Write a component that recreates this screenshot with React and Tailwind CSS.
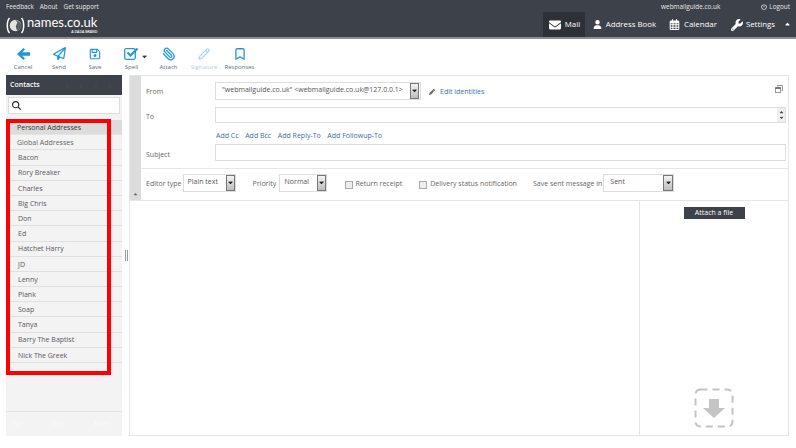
import React from "react";
import {
  FaRegPaperPlane,
  FaRegFloppyDisk,
  FaUser,
  FaRegCalendarDays,
  FaWrench,
  FaPowerOff,
  FaEnvelope,
  FaMagnifyingGlass,
  FaPen,
  FaCaretUp,
  FaCaretDown,
  FaRegWindowRestore,
  FaChevronLeft,
  FaChevronRight,
} from "react-icons/fa6";
import { Paperclip, Pencil, Bookmark } from "lucide-react";

const CONTACTS = [
  "Bacon",
  "Rory Breaker",
  "Charles",
  "Big Chris",
  "Don",
  "Ed",
  "Hatchet Harry",
  "JD",
  "Lenny",
  "Plank",
  "Soap",
  "Tanya",
  "Barry The Baptist",
  "Nick The Greek",
];

const SelectArrow = ({ className = "w-[9px]" }) => (
  <div className={`${className} h-full shrink-0 border border-[#777] bg-gradient-to-b from-[#f4f4f4] to-[#bdbdbd] flex items-center justify-center`}>
    <FaCaretDown className="text-[7px] text-[#222]" />
  </div>
);

const ToolButton = ({ icon, label, muted, width }) => (
  <div className={`${width} flex flex-col items-center`}>
    <div className="h-[19px] flex items-center justify-center text-[#2297d6]">{icon}</div>
    <span className={`text-[6px] leading-[8px] ${muted ? "text-[#b5cfdc]" : "text-[#55708a]"}`}>{label}</span>
  </div>
);

const Header = () => (
  <header className="h-[39px] bg-[#3d4149] border-b-2 border-[#8b8d91] text-white flex justify-between shrink-0">
    <div className="pl-[6px]">
      <div className="flex gap-[6px] text-[6.300px] leading-[13px] text-[#e8e8e8]">
        <span>Feedback</span>
        <span>About</span>
        <span>Get support</span>
      </div>
      <div className="flex items-start mt-[3px]">
        <svg width="20" height="17" viewBox="0 0 20 17" className="mt-px">
          <circle cx="9.500" cy="8.500" r="5.800" fill="#e2e2e2" />
          <path d="M9 3c2.500 1.500 2.800 3 1.500 4.500S10 11.500 11.500 14c2.500-1 3.800-3.200 3.800-5.500C15.300 6 12.500 3.200 9 3z" fill="#5a5e66" />
          <path d="M3.500 1C.6 4 .6 13 3.500 16M15.500 1c2.900 3 2.900 12 0 15" fill="none" stroke="#fff" strokeWidth="1.500" />
        </svg>
        <div className="flex flex-col items-end ml-px">
          <span className="text-[13px] leading-[13px] font-['Lato',sans-serif]">names.co.uk</span>
          <span className="text-[3.500px] leading-[4px] mt-px font-semibold">A DADA BRAND</span>
        </div>
      </div>
    </div>
    <div className="flex flex-col items-end">
      <div className="flex text-[6.400px] leading-[13px] pr-[6px] text-[#e8e8e8]">
        <span>webmailguide.co.uk</span>
        <span className="flex items-center gap-[2px] ml-[41px]">
          <FaPowerOff className="text-[6px]" />
          Logout
        </span>
      </div>
      <nav className="flex h-[26px] -mt-px text-[7.850px] items-stretch">
        <div className="w-[42px] bg-[#2d3036] flex items-center pl-[6px] gap-[4px]">
          <FaEnvelope className="text-[12px]" />
          Mail
        </div>
        <div className="flex items-center gap-[4px] ml-[8px]">
          <FaUser className="text-[9px]" />
          Address Book
        </div>
        <div className="flex items-center gap-[4px] ml-[13px]">
          <FaRegCalendarDays className="text-[11px]" />
          Calendar
        </div>
        <div className="flex items-center gap-[3px] ml-[14px] pr-[5px]">
          <FaWrench className="text-[12px]" />
          Settings
          <FaCaretUp className="text-[7px] ml-[6px]" />
        </div>
      </nav>
    </div>
  </header>
);

const Toolbar = () => (
  <div className="h-[36px] flex items-start pt-[5px] pl-[5px] shrink-0">
    <ToolButton
      width="w-[36px]"
      label="Cancel"
      icon={
        <svg width="13" height="12" viewBox="0 0 13 12" fill="currentColor">
          <path d="M6.500 0 8 1.500 5.300 4.300H13v3.400H5.300L8 10.500 6.500 12 0 6z" />
        </svg>
      }
    />
    <ToolButton width="w-[36px]" label="Send" icon={<FaRegPaperPlane className="text-[13px]" />} />
    <ToolButton width="w-[36px]" label="Save" icon={<FaRegFloppyDisk className="text-[12px]" />} />
    <div className="w-[37px] flex flex-col items-center">
      <div className="h-[19px] flex items-center text-[#2297d6]">
        <svg width="15" height="13" viewBox="0 0 15 13" fill="none" stroke="currentColor">
          <rect x="0.700" y="1.700" width="10.600" height="10.600" rx="1.500" strokeWidth="1.300" />
          <path d="M3.500 5.500 6.500 8.500 13.500 1.500" strokeWidth="2.200" />
        </svg>
        <FaCaretDown className="text-[7px] text-[#2b3a4a] ml-[2px] -mr-[9px] mt-[5px]" />
      </div>
      <span className="text-[6px] leading-[8px] text-[#55708a]">Spell</span>
    </div>
    <ToolButton width="w-[37px]" label="Attach" icon={<Paperclip size={14} strokeWidth={2.200} className="-scale-x-100" />} />
    <ToolButton width="w-[34px]" label="Signature" muted icon={<Pencil size={12} strokeWidth={2.500} className="text-[#a9d5ec]" />} />
    <ToolButton width="w-[37px]" label="Responses" icon={<Bookmark size={14} strokeWidth={2.200} />} />
  </div>
);

const ContactsPanel = () => (
  <aside className="w-[116px] ml-[6px] bg-[#f3f3f3] flex flex-col shrink-0">
    <div className="h-[20px] bg-[#3d4149] text-white text-[7px] font-semibold flex items-center pl-[4px] pr-[10px]">
      <span className="flex-1">Contacts</span>
      <div className="flex gap-[9px] text-[#4a4e56] text-[5px]">
        <FaChevronLeft />
        <FaChevronLeft />
        <FaChevronRight />
        <FaChevronRight />
      </div>
    </div>
    <div className="h-[17px] mx-[2px] mt-[2px] bg-white border border-[#ddd] flex items-center pl-[3px]">
      <FaMagnifyingGlass className="text-[9px] text-[#222]" />
    </div>
    <div className="mt-[6px] text-[7px] text-[#555]">
      <div className="h-[15.200px] bg-[#dcdcdc] pl-[11px] pt-[2px] flex items-center text-[#333] font-medium border-b border-[#e4e4e4]">Personal Addresses</div>
      <div className="h-[15.200px] pl-[11px] pt-[2px] flex items-center text-[#666] border-b border-[#e0e0e0]">Global Addresses</div>
      {CONTACTS.map((name) => (
        <div key={name} className="h-[15.200px] pl-[12px] pt-[2px] flex items-center text-[#5a5560] border-b border-[#e0e0e0]">
          {name}
        </div>
      ))}
    </div>
    <div className="flex-1" />
    <div className="h-[25px] border-t border-[#e4e4e4] flex items-center gap-[29px] pl-[6px] text-[7px] text-[#fafafa]">
      <span>To+</span>
      <span>Cc+</span>
      <span>Bcc+</span>
    </div>
  </aside>
);

const FormRow = ({ label, children, rowClass, labelClass = "" }) => (
  <div className={`flex items-center ${rowClass}`}>
    <span className={`w-[74px] pl-[5px] text-[#666] shrink-0 ${labelClass}`}>{label}</span>
    {children}
  </div>
);

const ComposeHeaders = () => (
  <div className="flex border-b border-[#e6e6e6] h-[125px] shrink-0">
    <div className="w-[11px] bg-[#dcdcdc] flex items-end justify-center pb-[3px] shrink-0">
      <FaCaretUp className="text-[5px] text-[#666]" />
    </div>
    <div className="flex-1 flex flex-col text-[7px] min-w-0">
      <div className="h-[93px] border-b border-[#e6e6e6] pt-[5px] pr-[2px]">
        <FormRow label="From" rowClass="h-[19px]" labelClass="pt-[4px]">
          <div className="w-[206px] h-[18px] border border-[#ddd] flex items-center pl-[6px] text-[#555] pr-px">
            <span className="flex-1 whitespace-nowrap">"webmailguide.co.uk" &lt;webmailguide.co.uk@127.0.0.1&gt;</span>
            <SelectArrow className="w-[9px] h-[14px]" />
          </div>
          <FaPen className="text-[6px] text-[#666] ml-[8px] mt-[3px]" />
          <span className="ml-[5px] pt-[3px] text-[#3a6ea5]">Edit identities</span>
          <div className="flex-1" />
          <FaRegWindowRestore className="text-[8px] text-[#777] mr-[3px] -mt-[4px]" />
        </FormRow>
        <FormRow label="To" rowClass="h-[16px] mt-[7px]" labelClass="pt-[4px]">
          <div className="flex-1 h-[16px] border border-[#ddd] flex justify-end">
            <div className="w-[8px] bg-[#eee] flex flex-col items-center justify-center text-[#444]">
              <FaCaretUp className="text-[5px]" />
              <FaCaretDown className="text-[5px]" />
            </div>
          </div>
        </FormRow>
        <div className="pl-[75px] mt-[8px] h-[11px] flex gap-[6.600px] items-center text-[#3a6ea5]">
          <span>Add Cc</span>
          <span>Add Bcc</span>
          <span>Add Reply-To</span>
          <span>Add Followup-To</span>
        </div>
        <FormRow label="Subject" rowClass="h-[17px] mt-[2px]" labelClass="pt-[5px]">
          <div className="flex-1 h-[17px] border border-[#ddd]" />
        </FormRow>
      </div>
      <div className="flex-1 flex items-center pl-[5px] text-[#666]">
        <span>Editor type</span>
        <div className="ml-px w-[53px] h-[18px] -mt-[4px] border border-[#ddd] flex items-center pl-[4px] text-[#555]">
          <span className="flex-1">Plain text</span>
          <SelectArrow className="w-[9px]" />
        </div>
        <span className="ml-[17px] w-[25px]">Priority</span>
        <div className="ml-px w-[48px] h-[18px] -mt-[4px] border border-[#ddd] flex items-center pl-[5px] text-[#555]">
          <span className="flex-1">Normal</span>
          <SelectArrow className="w-[9px]" />
        </div>
        <div className="ml-[18px] w-[8px] h-[8px] border border-[#aaa] bg-[#eee]" />
        <span className="ml-[3px]">Return receipt</span>
        <div className="ml-[17px] w-[8px] h-[8px] border border-[#aaa] bg-[#eee]" />
        <span className="ml-[3px]">Delivery status notification</span>
        <span className="ml-[16px]">Save sent message in</span>
        <div className="ml-px w-[71px] h-[18px] -mt-[4px] border border-[#ddd] flex items-center pl-[6px] text-[#555]">
          <span className="flex-1">Sent</span>
          <SelectArrow className="w-[10px]" />
        </div>
      </div>
    </div>
  </div>
);

const Attachments = () => (
  <div className="w-[149px] border-l border-[#e6e6e6] flex flex-col items-center shrink-0">
    <div className="mt-[6px] w-[61px] h-[12px] bg-[#3d4149] text-white text-[7px] flex items-center justify-center">Attach a file</div>
    <div className="flex-1" />
    <svg width="40" height="40" viewBox="0 0 40 40" className="mb-[7px] text-[#c4c4c4]">
      <rect x="1.500" y="1.500" width="37" height="37" rx="5" fill="none" stroke="currentColor" strokeWidth="2" strokeDasharray="7 5" />
      <path d="M15 11h10v9h6L20 30 9 20h6z" fill="currentColor" />
    </svg>
  </div>
);

const App = () => (
  <div className="relative w-[796px] h-[448px] bg-white overflow-hidden flex flex-col font-['Open_Sans',sans-serif]">
    <Header />
    <Toolbar />
    <div className="flex h-[361px]">
      <ContactsPanel />
      <div className="w-[7px] flex items-center justify-center shrink-0 pl-[2px]">
        <div className="w-[3px] h-[11px] border-x border-[#999]" />
      </div>
      <main className="w-[660px] border border-[#e6e6e6] flex flex-col shrink-0">
        <ComposeHeaders />
        <div className="flex-1 flex min-h-0">
          <div className="flex-1" />
          <Attachments />
        </div>
      </main>
    </div>
    {/* red annotation drawn over the contact list */}
    <div className="absolute left-[6px] top-[119px] w-[105px] h-[256px] border-[4px] border-[#ff0000]" />
  </div>
);

export default App;
